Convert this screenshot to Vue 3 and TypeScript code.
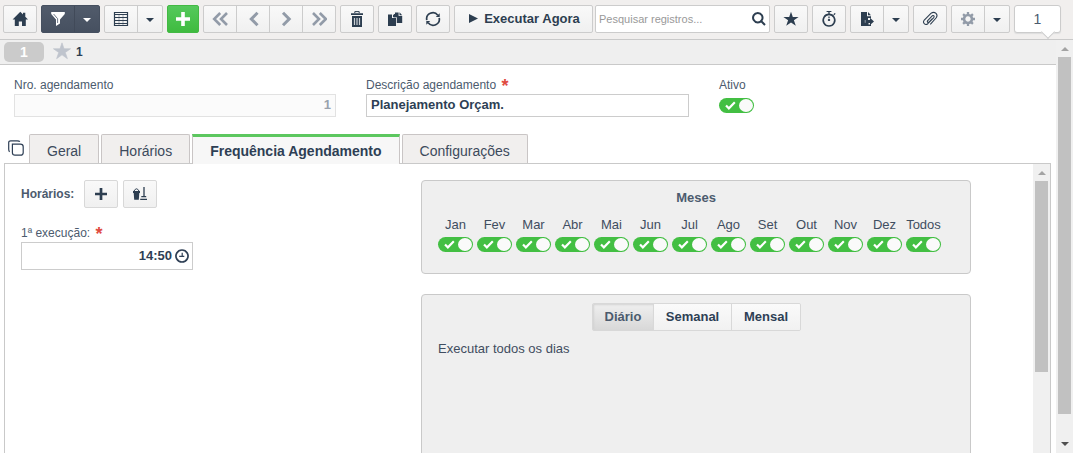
<script setup lang="ts">
import { ref } from 'vue'

interface Shape { d: string; line?: number; tone?: string }
interface Tool { icons: string[]; kind?: string; caret?: boolean }

const icons: Record<string, Shape[]> = {
  home: [{ d: 'M8.3 .8 L16 8.6 H13.8 V15 H10 V10.5 H6.8 V15 H2.8 V8.6 H.6 Z M11 1.8 H13.3 V6.2 L11 4 Z' }],
  filter: [{ d: 'M1.2 1 H14.8 V3 L10 8.5 V12.5 L6 15 V8.5 L1.2 3 Z' }, { d: 'M3.6 3 L7.6 7.7 V12', line: 0.8, tone: '#4a5568' }],
  table: [
    { d: 'M1.5 1.5 H14.5 V14.5 H1.5 Z', line: 1.2 },
    { d: 'M1.5 3.5 H14.5 M1.5 6.5 H14.5 M1.5 9.5 H14.5 M1.5 12.5 H14.5', line: 1.2 },
    { d: 'M6 4 V14 M10 4 V14', line: 0.4 },
  ],
  plus: [{ d: 'M8 1 V15 M1 8 H15', line: 3.6 }],
  add: [{ d: 'M8 2 V14 M2 8 H14', line: 2.7 }],
  first: [{ d: 'M8.2 2 L2.2 8 L8.2 14 M15 2 L9 8 L15 14', line: 2.6 }],
  prev: [{ d: 'M12.5 1.8 L6.3 8 L12.5 14.2', line: 3 }],
  next: [{ d: 'M5 1.8 L11.2 8 L5 14.2', line: 3 }],
  last: [{ d: 'M2 2 L8 8 L2 14 M8.8 2 L14.8 8 L8.8 14', line: 2.6 }],
  trash: [
    { d: 'M2 2.2 H14 V4 H2 Z M3 5 H13 V16 H3 Z' },
    { d: 'M5.8 2 V.6 H10.2 V2', line: 1 },
    { d: 'M5.5 7 V14 M8 7 V14 M10.5 7 V14', line: 1.2, tone: '#cbd0d5' },
  ],
  copy: [
    { d: 'M1 3.5 H5 V7 H9 V15 H1 Z M8 1.5 H11.6 V5 H15.2 V12 H9.8 V6.2 H7 V3 H8 Z' },
    { d: 'M6 3.3 L9 6.2 H6 Z M12.5 1.2 L15.2 4.2 H12.5 Z' },
  ],
  refresh: [
    { d: 'M1.8 9.2 A6.2 6.2 0 0 1 12.8 4.2 M14.2 6.8 A6.2 6.2 0 0 1 3.2 11.8', line: 1.7 },
    { d: 'M14.7 2.2 V6 H10.8 Z M1.3 13.8 V10 H5.2 Z' },
  ],
  star: [{ d: 'M8 .8 L9.8 6 H15.6 L10.9 9.3 L12.8 14.8 L8 11.4 L3.2 14.8 L5.1 9.3 L.4 6 H6.2 Z' }],
  timer: [
    { d: 'M8 3.4 A5.8 5.8 0 1 1 7.99 3.4 Z', line: 1.6 },
    { d: 'M5.6 .4 H10.4 M8 .4 V3.4 M12.8 3.8 L14.2 2.4 M8 5.5 V7.3 M6.9 9 H9.1 M8 8 V10', line: 1.3 },
  ],
  exportDoc: [
    { d: 'M2 1 H8 V5.2 H12 V7 H9 V9 H11 V6.8 L15 10.4 L11 14 V12 H9.5 V13.5 H12 V15 H2 Z' },
    { d: 'M9 1 L12 4.2 H9 Z' },
    { d: 'M6.2 9 V11.8', line: 0.9, tone: '#9ca5af' },
  ],
  clip: [{ d: 'M5.7 9.6 L10.2 4.8 Q11.4 4 12 5 Q12.4 5.8 11.5 6.8 L5.8 12.7 Q3.8 14.2 2.3 12.7 Q.7 11 2.3 9 L8.9 2.4 Q11.6 .3 14 2.3 Q16 4.4 14 7 L8.3 13.3 M5.7 9.6 Q4.8 11 6 11.4 Q6.8 11.5 7.5 10.7 L10.4 7.6', line: 1.1 }],
  gear: [
    { d: 'M8 4 A4 4 0 1 1 7.99 4 Z', line: 2.6 },
    { d: 'M8 1 V3.5 M8 12.5 V15 M1 8 H3.5 M12.5 8 H15 M3.1 3.1 L5 5 M11 11 L12.9 12.9 M3.1 12.9 L5 11 M11 5 L12.9 3.1', line: 2.3 },
  ],
  search: [{ d: 'M6.8 2 A4.7 4.7 0 1 1 6.79 2 Z M10.3 10.3 L14 14', line: 2 }],
  broom: [
    { d: 'M1 5 H8 V7 H7.3 L6.8 13.7 H2.2 L1.7 7 H1 Z' },
    { d: 'M2 5 Q4.5 .6 7 5', line: 1 },
    { d: 'M12 1 V10 M9.3 10.7 H14.2 M8.2 13.4 H15', line: 1.3 },
  ],
  clock: [
    { d: 'M8 2 A6 6 0 1 1 7.99 2 Z', line: 1.7 },
    { d: 'M8.2 4.7 V8.3 M5.2 8.3 H10.3', line: 1.2 },
  ],
  windows: [{ d: 'M4.5 4.2 H12.3 Q15.2 4.2 15.2 6.8 V12.7 Q15.2 15.2 12.5 15.2 H7 Q4.4 15.2 4.4 12.7 V4.2 Z M1.7 11.8 Q.7 11.2 .7 9.2 V2.4 Q.7 .8 2.7 .8 H9.2 Q11.4 .8 11.8 1.8', line: 1.2 }],
}

const leftTools: Tool[] = [
  { icons: ['home'] },
  { icons: ['filter'], kind: 'dark', caret: true },
  { icons: ['table'], caret: true },
  { icons: ['plus'], kind: 'green' },
  { icons: ['first', 'prev', 'next', 'last'], kind: 'muted' },
  { icons: ['trash'] },
  { icons: ['copy'] },
  { icons: ['refresh'] },
]
const rightTools: Tool[] = [
  { icons: ['star'] },
  { icons: ['timer'] },
  { icons: ['exportDoc'], caret: true },
  { icons: ['clip'] },
  { icons: ['gear'], kind: 'muted', caret: true },
]
const tabs = ['Geral', 'Horários', 'Frequência Agendamento', 'Configurações']
const activeTab = ref(2)
const modes = ['Diário', 'Semanal', 'Mensal']
const mode = ref(0)
const active = ref(true)
const months = ref(
  ['Jan', 'Fev', 'Mar', 'Abr', 'Mai', 'Jun', 'Jul', 'Ago', 'Set', 'Out', 'Nov', 'Dez', 'Todos']
    .map((name) => ({ name, on: true })),
)
</script>

<template>
  <div class="app">
    <header class="toolbar">
      <div v-for="(t, i) in leftTools" :key="i" class="group" :class="t.kind">
        <button v-for="name in t.icons" :key="name" class="btn">
          <svg class="ico" viewBox="0 0 16 16">
            <path v-for="(s, k) in icons[name]" :key="k" :d="s.d" :fill="s.line ? 'none' : s.tone || 'currentColor'" :stroke="s.line ? s.tone || 'currentColor' : 'none'" :stroke-width="s.line" />
          </svg>
        </button>
        <button v-if="t.caret" class="btn drop"><i class="caret"></i></button>
      </div>
      <div class="group run">
        <button class="btn"><svg class="play" viewBox="0 0 9 9"><path d="M0 0 L9 4.5 L0 9 Z" fill="currentColor" /></svg>Executar Agora</button>
      </div>
      <div class="search">
        <span>Pesquisar registros...</span>
        <svg class="ico" viewBox="0 0 16 16"><path :d="icons.search[0].d" fill="none" stroke="currentColor" stroke-width="2" /></svg>
      </div>
      <div v-for="(t, i) in rightTools" :key="'r' + i" class="group" :class="t.kind">
        <button v-for="name in t.icons" :key="name" class="btn">
          <svg class="ico" viewBox="0 0 16 16">
            <path v-for="(s, k) in icons[name]" :key="k" :d="s.d" :fill="s.line ? 'none' : s.tone || 'currentColor'" :stroke="s.line ? s.tone || 'currentColor' : 'none'" :stroke-width="s.line" />
          </svg>
        </button>
        <button v-if="t.caret" class="btn drop"><i class="caret"></i></button>
      </div>
      <div class="bubble">1</div>
    </header>

    <div class="body">
      <main class="content">
        <div class="crumbs">
          <span class="pill">1</span>
          <svg class="fav" viewBox="0 0 16 16"><path :d="icons.star[0].d" fill="#bfc4cd" stroke="#bfc4cd" stroke-width=".6" /></svg>
          <b>1</b>
        </div>

        <section class="form">
          <div class="field">
            <label>Nro. agendamento</label>
            <div class="input locked">1</div>
          </div>
          <div class="field">
            <label>Descrição agendamento <em>*</em></label>
            <div class="input">Planejamento Orçam.</div>
          </div>
          <div class="field">
            <label>Ativo</label>
            <span class="switch" :class="{ off: !active }" @click="active = !active"><svg viewBox="0 0 12 10"><path d="M1 5 L4.2 8.2 L10.8 1.5" /></svg><i></i></span>
          </div>
        </section>

        <nav class="tabs">
          <svg class="ico stack" viewBox="0 0 16 16"><path :d="icons.windows[0].d" fill="none" stroke="currentColor" stroke-width="1.2" /></svg>
          <button v-for="(tab, i) in tabs" :key="tab" class="tab" :class="{ on: i === activeTab }" @click="activeTab = i">{{ tab }}</button>
        </nav>

        <section class="panel">
          <div class="times">
            <div class="row">
              <b>Horários:</b>
              <button v-for="name in ['add', 'broom']" :key="name" class="btn square">
                <svg class="ico" viewBox="0 0 16 16">
                  <path v-for="(s, k) in icons[name]" :key="k" :d="s.d" :fill="s.line ? 'none' : 'currentColor'" :stroke="s.line ? 'currentColor' : 'none'" :stroke-width="s.line" />
                </svg>
              </button>
            </div>
            <label class="first-run">1ª execução: <em>*</em></label>
            <div class="time"><span>14:50</span>
              <svg class="ico" viewBox="0 0 16 16"><path v-for="(s, k) in icons.clock" :key="k" :d="s.d" fill="none" stroke="currentColor" :stroke-width="s.line" /></svg>
            </div>
          </div>
          <div class="cards">
            <div class="card">
              <h3>Meses</h3>
              <div class="months">
                <div v-for="m in months" :key="m.name" class="month">
                  <span>{{ m.name }}</span>
                  <span class="switch" :class="{ off: !m.on }" @click="m.on = !m.on"><svg viewBox="0 0 12 10"><path d="M1 5 L4.2 8.2 L10.8 1.5" /></svg><i></i></span>
                </div>
              </div>
            </div>
            <div class="card freq">
              <div class="modes">
                <button v-for="(m, i) in modes" :key="m" :class="{ on: i === mode }" @click="mode = i">{{ m }}</button>
              </div>
              <p>Executar todos os dias</p>
            </div>
          </div>
          <div class="scroll inner"><i class="arrow up"></i><div class="thumb"></div></div>
        </section>
      </main>
      <div class="scroll outer"><i class="arrow up"></i><div class="thumb"></div><i class="arrow down"></i></div>
    </div>
  </div>
</template>

<style>
body { margin: 0; overflow: hidden; }
</style>

<style scoped>
* { box-sizing: border-box; }
.app { width: 1073px; height: 453px; overflow: hidden; display: flex; flex-direction: column; background: #fff; color: #2e3f55; font-family: "Liberation Sans", Arial, sans-serif; font-size: 13px; }
button { font: inherit; color: inherit; margin: 0; padding: 0; }
.toolbar { flex: none; height: 40px; padding: 5px 0 0 3px; display: flex; gap: 4px; background: #f1efee; border-bottom: 1px solid #c9c9c9; }
.group { display: flex; height: 28px; border: 1px solid #ccc; border-radius: 2px; background: linear-gradient(#f9f9f9, #f0f0f0); color: #2d3e50; }
.btn { width: 32px; border: 0; background: none; display: flex; align-items: center; justify-content: center; }
.group .btn + .btn { width: 33px; border-left: 1px solid #ccc; }
.group .btn.drop { width: 25px; }
.ico { width: 16px; height: 16px; display: block; flex: none; }
.dark { color: #fff; background: linear-gradient(#515b6b, #465060); border-color: #465060; }
.group.dark .btn + .btn { border-left-color: #414a59; }
.green { color: #fff; background: linear-gradient(#55c95c, #3fbb3f); border-color: #43b944; }
.green .btn { width: 30px; }
.muted { color: #929ba8; }
.drop { color: #2d3e50; }
.dark .drop { color: #fff; }
.caret { border: 4px solid transparent; border-top-color: currentColor; border-bottom: 0; margin-top: 1px; }
.run .btn { width: 137px; font-weight: bold; gap: 6px; padding: 0 0 2px 2px; }
.play { width: 9px; height: 9px; }
.search { width: 175px; height: 28px; margin-left: -2px; border: 1px solid #ccc; border-radius: 2px; background: #fff; display: flex; align-items: center; justify-content: space-between; padding: 0 2px 0 3px; font-size: 11px; color: #999; }
.search .ico { color: #2d3e50; }
.bubble { position: relative; width: 47px; height: 28px; background: #fff; border: 1px solid #ccc; border-radius: 3px; text-align: center; line-height: 27px; font-size: 14px; color: #4c5b6e; box-shadow: 0 1px 1px #ddd; }
.bubble::after { content: ""; position: absolute; right: 7px; bottom: -5px; width: 9px; height: 9px; background: #fff; border: solid #ccc; border-width: 0 1px 1px 0; transform: rotate(45deg); }

.body { flex: 1; min-height: 0; display: flex; }
.content { width: 1056px; display: flex; flex-direction: column; }
.crumbs { flex: none; height: 25px; background: #efefef; border-bottom: 1px solid #c9c9c9; display: flex; align-items: center; padding-left: 4px; font-size: 12px; }
.pill { width: 40px; height: 20px; border-radius: 5px; background: #cbcbcb; color: #fff; font-weight: bold; font-size: 14px; text-align: center; line-height: 21px; }
.fav { width: 18px; height: 18px; margin: 0 5px 2px 9px; }

.form { flex: none; height: 69px; padding: 13px 0 0 14px; display: grid; grid-template-columns: 352px 353px 1fr; }
label { display: block; height: 16px; line-height: 15px; font-size: 12px; color: #4c5b6e; white-space: nowrap; }
em { font: bold 18px/10px "Liberation Sans", sans-serif; color: #e04b3f; vertical-align: -5px; margin-left: 2px; display: inline-block; height: 10px; transform: translateY(-2px); }
.input { width: 323px; height: 23px; border: 1px solid #ccc; padding: 0 4px; font-weight: bold; line-height: 20px; }
.input.locked { width: 322px; text-align: right; color: #9aa2ad; background: #fbfbfb; border-color: #e2e2e2; }
.switch { display: flex; align-items: center; justify-content: space-between; width: 35px; height: 15px; padding: 0 1px 0 6px; border-radius: 8px; background: #43bf43; }
.switch.off { flex-direction: row-reverse; padding: 0 6px 0 1px; background: #c4c8cc; }
.field .switch { margin-top: 4px; }
.switch svg { width: 11px; height: 9px; fill: none; stroke: #fff; stroke-width: 2.4; }
.switch i { width: 14px; height: 13px; border-radius: 50%; background: #fafafa; }

.tabs { flex: none; height: 30px; margin-bottom: -1px; padding-left: 8px; display: flex; gap: 2px; z-index: 1; }
.stack { margin: 6px 3px 0 0; }
.tab { height: 29px; border: 1px solid #c9c5c5; border-bottom: 0; border-radius: 2px 2px 0 0; background: #f1efee; padding: 4px 17px 0; font-size: 14px; color: #3c4a5c; white-space: nowrap; }
.tab.on { height: 30px; padding: 0 17px; border-top: 3px solid #5cc75f; border-radius: 0; background: #f7f7f7; font-weight: bold; color: #2e3f55; }
.panel { flex: 1; min-height: 0; width: 1047px; margin-left: 4px; border: 1px solid #c9c9c9; border-bottom: 0; display: flex; overflow: hidden; }
.times { width: 416px; padding: 16px 0 0 16px; }
.row { display: flex; align-items: center; height: 28px; font-size: 12px; color: #4c5b6e; }
.row b { width: 63px; }
.square { width: 34px; height: 28px; margin-right: 5px; border: 1px solid #d8d8d8; border-radius: 2px; background: linear-gradient(#f9f9f9, #f0f0f0); color: #2d3e50; }
.first-run { margin-top: 18px; }
.time { width: 172px; height: 28px; border: 1px solid #ccc; display: flex; align-items: center; justify-content: flex-end; gap: 2px; padding-right: 2px; font-weight: bold; }
.time span { padding-bottom: 2px; }
.cards { width: 612px; padding-top: 16px; }
.card { width: 550px; height: 94px; border: 1px solid #c9c9c9; border-radius: 4px; background: #efefef; }
h3 { margin: 9px 0 11px; height: 16px; line-height: 16px; font-size: 13px; text-align: center; color: #4c5b6e; }
.months { display: flex; gap: 4px; padding-left: 16px; color: #3f4d60; }
.month { width: 35px; display: flex; flex-direction: column; align-items: center; white-space: nowrap; }
.month > span:first-child { height: 20px; line-height: 16px; }
.freq { height: 300px; margin-top: 20px; padding-top: 8px; }
.modes { display: flex; width: 209px; height: 28px; margin: 0 auto; border: 1px solid #d8d8d8; border-radius: 2px; overflow: hidden; font-weight: bold; }
.modes button { flex: 0 0 78px; padding: 0 0 2px 1px; border: 0; border-left: 1px solid #d8d8d8; background: linear-gradient(#fafafa, #f1f1f1); }
.modes button:first-child { flex-basis: 60px; border-left: 0; }
.modes button:last-child { flex-basis: 69px; }
.modes button.on { background: linear-gradient(#efefef, #d8d8d8); color: #4c5b6e; box-shadow: inset 1px 1px 2px #d2d2d2; }
p { margin: 10px 0 0 16px; line-height: 16px; color: #3f4d60; }

.scroll { width: 17px; background: #f0f0f0; display: flex; flex-direction: column; align-items: center; }
.arrow { flex: none; border: 4px solid transparent; }
.arrow.up { border-top: 0; border-bottom-color: #a3a3a3; margin: 7px 0 6px; }
.arrow.down { border-bottom: 0; border-top-color: #505050; margin-top: 28px; }
.thumb { width: 13px; background: #c1c1c1; flex: none; }
.inner .thumb { height: 191px; }
.outer .thumb { height: 357px; }
</style>
